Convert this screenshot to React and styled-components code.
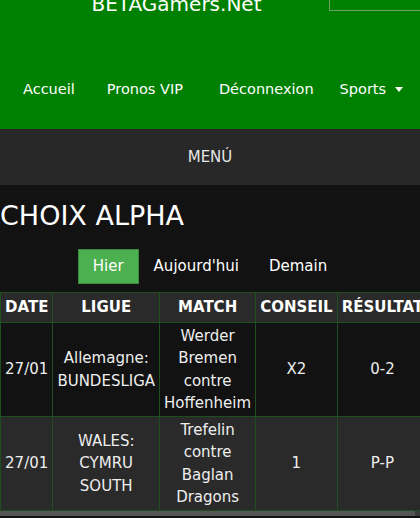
import React from 'react'
import styled, { createGlobalStyle } from 'styled-components'

const GlobalStyle = createGlobalStyle`
  body {
    margin: 0;
    background: #121212;
    font-family: "DejaVu Sans", Verdana, sans-serif;
    color: #fff;
    overflow: hidden;
  }
`

const Header = styled.header`
  height: 129px;
  background: #008000;
  display: flex;
  flex-direction: column;
`

const TopRow = styled.div`
  height: 14px;
  flex: none;
  display: flex;
  align-items: flex-end;
`

const Brand = styled.div`
  flex: 1;
  padding-left: 24px;
  text-align: center;
  font-size: 20px;
  line-height: 20px;
  color: #fff;
`

const Search = styled.input`
  box-sizing: border-box;
  flex: none;
  height: 30px;
  width: 91px;
  margin-bottom: 3px;
  border: 1px solid #6f9f6f;
  border-right: 0;
  background: transparent;
  outline: none;
`

const Nav = styled.nav`
  display: flex;
  align-items: center;
  gap: 32px;
  padding: 65px 0 0 23px;
`

const NavLink = styled.a`
  color: #fff;
  font-size: 14.5px;
  line-height: 20px;
  text-decoration: none;
  white-space: nowrap;
  display: flex;
  align-items: center;
  gap: 9px;
  margin-left: ${p => p.$shift || 0}px;
`

const Caret = styled.span`
  width: 0;
  height: 0;
  border-left: 4.5px solid transparent;
  border-right: 4.5px solid transparent;
  border-top: 5px solid #fff;
`

const MenuBar = styled.div`
  height: 56px;
  background: #282828;
  display: flex;
  align-items: center;
  justify-content: center;
  font-size: 15px;
  color: #e6e6e6;
`

const Main = styled.main`
  padding-top: 15px;
`

const Title = styled.h1`
  margin: 0;
  font-size: 27px;
  line-height: 32px;
  font-weight: normal;
  color: #fff;
`

const Tabs = styled.div`
  display: flex;
  justify-content: center;
  margin: 17px 0 8px;
`

const Tab = styled.button`
  font-family: inherit;
  font-size: 15px;
  line-height: 21px;
  padding: 6px 14px;
  color: #fff;
  cursor: pointer;
  background: ${p => (p.$active ? '#4caf50' : 'transparent')};
  border: 1px solid ${p => (p.$active ? '#3b8a3e' : 'transparent')};
`

const TableWrap = styled.div`
  overflow-x: auto;
  scrollbar-width: none;
`

const Table = styled.table`
  border-collapse: collapse;
  font-size: 15px;
  line-height: 22.5px;
  text-align: center;
`

const Th = styled.th`
  background: #2a2a2a;
  border: 1px solid #1f4f1f;
  padding: 3px 4px;
  color: #fff;
  font-weight: bold;
`

const Row = styled.tr`
  background: ${p => (p.$alt ? '#2a2a2a' : '#121212')};
`

const Td = styled.td`
  border: 1px solid #1f4f1f;
  padding: 2px 4px 1px;
  color: #eee;
`

const ScrollBar = styled.div`
  display: flex;
  height: 5px;
  background: #3a3a3a;
`

const Thumb = styled.div`
  width: 415px;
  background: #555;
`

const rows = [
  { date: '27/01', league: 'Allemagne: BUNDESLIGA', match: 'Werder Bremen contre Hoffenheim', tip: 'X2', result: '0-2' },
  { date: '27/01', league: 'WALES: CYMRU SOUTH', match: 'Trefelin contre Baglan Dragons', tip: '1', result: 'P-P' },
]

export default function App() {
  return (
    <>
      <GlobalStyle />
      <Header>
        <TopRow>
          <Brand>BETAGamers.Net</Brand>
          <Search type="text" />
        </TopRow>
        <Nav>
          <NavLink href="#">Accueil</NavLink>
          <NavLink href="#">Pronos VIP</NavLink>
          <NavLink href="#" $shift={4}>Déconnexion</NavLink>
          <NavLink href="#" $shift={-6}>Sports<Caret /></NavLink>
        </Nav>
      </Header>
      <MenuBar>MENÚ</MenuBar>
      <Main>
        <Title>CHOIX ALPHA</Title>
        <Tabs>
          <Tab $active>Hier</Tab>
          <Tab>Aujourd'hui</Tab>
          <Tab>Demain</Tab>
        </Tabs>
        <TableWrap>
          <Table>
            <thead>
              <tr>
                <Th>DATE</Th>
                <Th>LIGUE</Th>
                <Th>MATCH</Th>
                <Th>CONSEIL</Th>
                <Th>RÉSULTAT</Th>
              </tr>
            </thead>
            <tbody>
              {rows.map((r, i) => (
                <Row key={i} $alt={i % 2 === 1}>
                  <Td>{r.date}</Td>
                  <Td>{r.league}</Td>
                  <Td>{r.match}</Td>
                  <Td>{r.tip}</Td>
                  <Td>{r.result}</Td>
                </Row>
              ))}
            </tbody>
          </Table>
        </TableWrap>
        <ScrollBar>
          <Thumb />
        </ScrollBar>
      </Main>
    </>
  )
}
